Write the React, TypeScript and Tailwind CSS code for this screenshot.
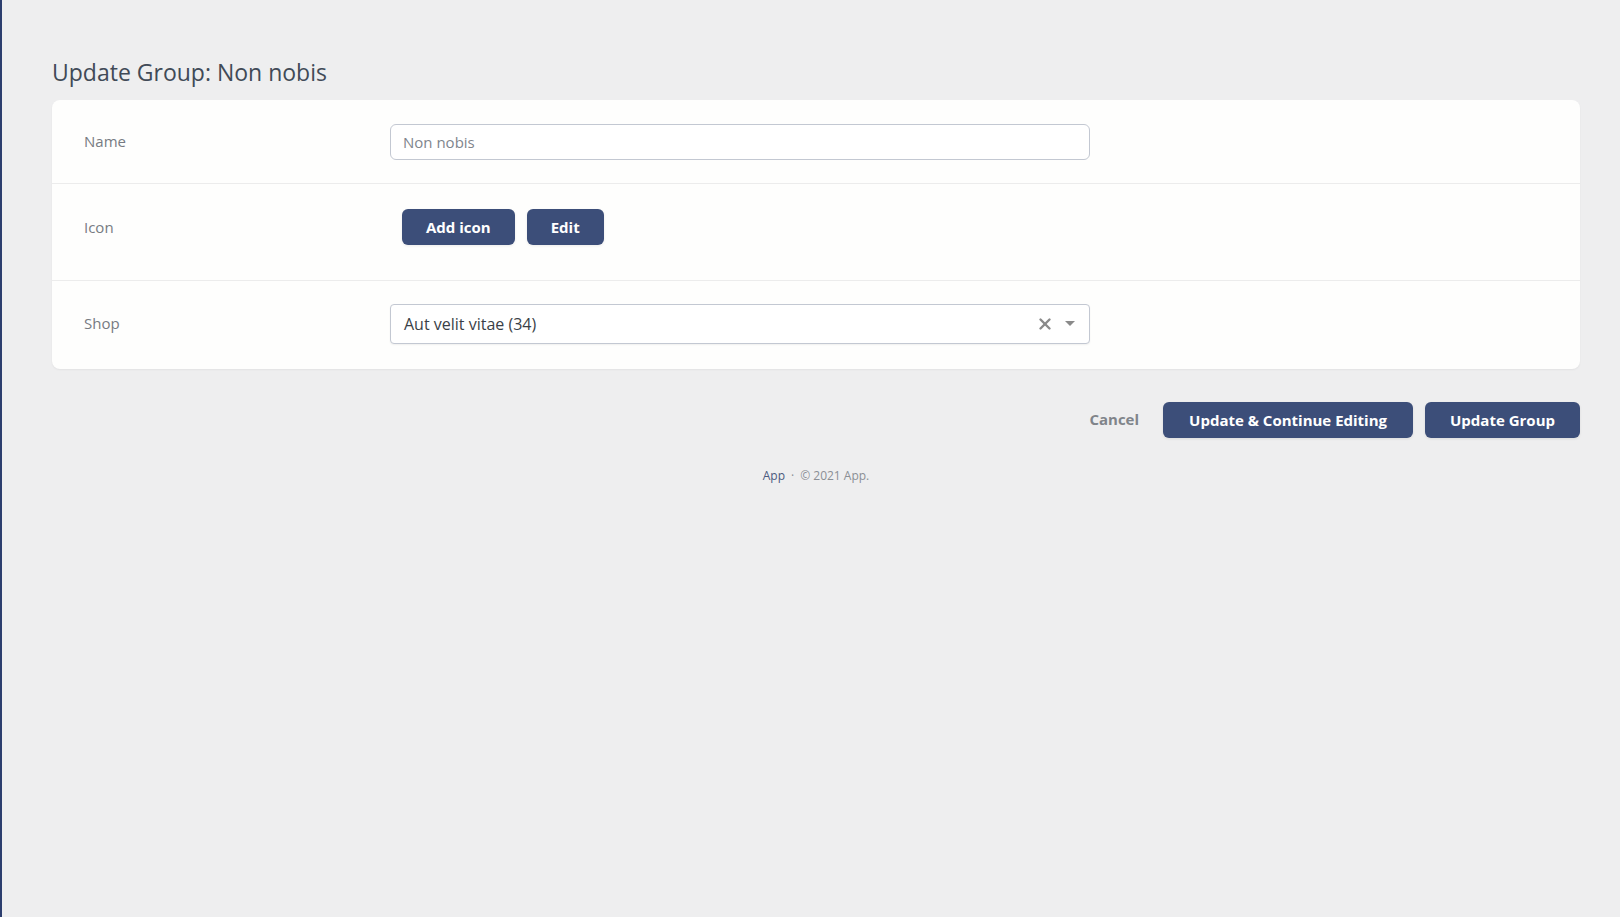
import { X } from "lucide-react";

const font = { fontFamily: '"Open Sans", "Liberation Sans", sans-serif' };

export default function App() {
  return (
    <div
      className="min-h-[917px] w-full border-l-2 border-[#2c3e6e] bg-[#eeeeef] text-[#3f4650]"
      style={font}
    >
      <div className="pl-[50px] pr-[40px] pt-[56px]">
        {/* Titre */}
        <h1 className="mb-[12px] text-[23px] leading-[32px] text-[#414a57]">Update Group: Non nobis</h1>

        {/* Carte du formulaire */}
        <div className="rounded-lg bg-[#fefefd] shadow-[0_1px_2px_rgba(0,0,0,0.05)]">
          <div className="grid h-[84px] grid-cols-[306px_700px] items-center border-b border-[#ececec] px-8">
            <label className="text-[15px] text-[#777b82]">Name</label>
            <input
              type="text"
              defaultValue=""
              placeholder="Non nobis"
              className="h-[36px] w-full rounded-md border border-[#c3c8d2] bg-white px-3 text-[15px] text-[#3f4650] placeholder-[#80858d] focus:outline-none"
            />
          </div>

          <div className="grid h-[97px] grid-cols-[306px_700px] items-center border-b border-[#ececec] px-8">
            <label className="-mt-[10px] text-[15px] text-[#777b82]">Icon</label>
            <div className="-mt-[10px] flex gap-3 pl-3">
              <button className="h-[36px] rounded-md bg-[#3c4e79] px-[24px] text-[15px] font-bold text-white shadow-[0_1px_3px_rgba(0,0,0,0.08)]">
                Add icon
              </button>
              <button className="h-[36px] rounded-md bg-[#3c4e79] px-[24px] text-[15px] font-bold text-white shadow-[0_1px_3px_rgba(0,0,0,0.08)]">
                Edit
              </button>
            </div>
          </div>

          <div className="grid h-[88px] grid-cols-[306px_700px] items-center px-8">
            <label className="-mt-[3px] text-[15px] text-[#777b82]">Shop</label>
            <div className="-mt-[3px] flex h-[40px] items-center rounded-[4px] border border-[#c3c8d2] bg-white pl-[13px] pr-[14px] shadow-[0_1px_2px_rgba(0,0,0,0.06)]">
              <span className="flex-1 text-[16px] text-[#3a3f47]">Aut velit vitae (34)</span>
              <X className="mr-[11px] h-[18px] w-[18px] text-[#8a8a8a]" strokeWidth={3.2} />
              <span className="h-0 w-0 border-x-[5px] border-t-[5px] border-x-transparent border-t-[#8a8a8a]" />
            </div>
          </div>
        </div>

        {/* Actions */}
        <div className="mt-[33px] flex items-center justify-end gap-3">
          <button className="mr-[12px] -mt-[2px] text-[15px] font-bold text-[#80848a]">Cancel</button>
          <button className="h-[36px] rounded-md bg-[#3c4e79] px-[26px] text-[15px] font-bold text-white shadow-[0_1px_3px_rgba(0,0,0,0.08)]">
            Update &amp; Continue Editing
          </button>
          <button className="h-[36px] rounded-md bg-[#3c4e79] px-[25px] text-[15px] font-bold text-white shadow-[0_1px_3px_rgba(0,0,0,0.08)]">
            Update Group
          </button>
        </div>

        {/* Pied de page */}
        <div className="mt-[29px] flex justify-center gap-[6px] text-[12px] text-[#8b8f95]">
          <span className="text-[#4b5a7e]">App</span>
          <span>·</span>
          <span>© 2021 App.</span>
        </div>
      </div>
    </div>
  );
}
